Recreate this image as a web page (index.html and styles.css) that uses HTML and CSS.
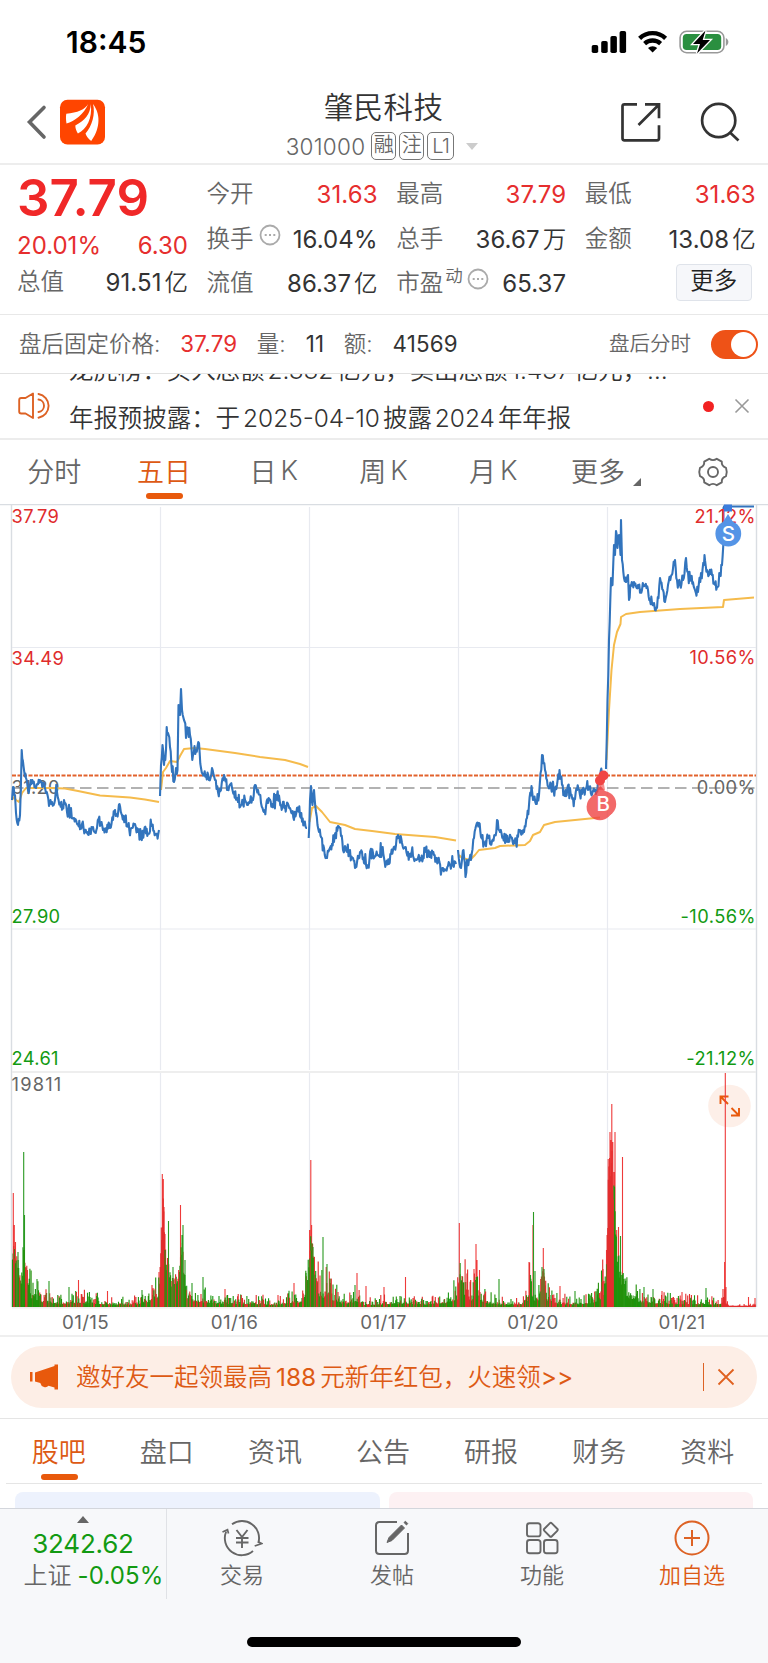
FILE: index.html
```html
<!DOCTYPE html>
<html lang="zh-CN">
<head>
<meta charset="utf-8">
<title>肇民科技 301000</title>
<link rel="stylesheet" href="styles.css">
</head>
<body>
<div class="screen">
  <div class="status">
    <span class="clock">18:45</span>
    <svg class="status-icons" width="140" height="26" viewBox="590 29 140 26">
      <g fill="#000"><rect x="591.7" y="45" width="6.5" height="8" rx="1.8"/><rect x="601.2" y="41" width="6.5" height="12" rx="1.8"/><rect x="610.4" y="36" width="6.5" height="17" rx="1.8"/><rect x="619.6" y="31" width="6.5" height="22" rx="1.8"/></g>
      <g fill="none" stroke="#000" stroke-width="4.4"><path d="M639.6 38.3a19 19 0 0 1 26 0"/><path d="M644.6 43.6a12 12 0 0 1 16 0"/></g>
      <path d="M652.6 52.5l-4.6-4.6a7 7 0 0 1 9.2 0z"/>
      <rect x="680.1" y="31.3" width="43.8" height="21.4" rx="6.5" fill="none" stroke="#999" stroke-width="1.6"/>
      <rect x="682.8" y="34" width="38.400" height="16" rx="3.8" fill="#2a8f40"/>
      <path d="M725.8 38v8c3.4-1.400 3.400-6.600 0-8z" fill="#999"/>
      <path d="M705.500 30.500l-12.500 13.500h7l-3 9.500 13-13.500h-7.300z" stroke="#fff" stroke-width="2.600" paint-order="stroke" fill="#000"/>
    </svg>
  </div>

  <header class="head">
    <svg class="head-left" width="90" height="50" viewBox="20 97 90 50">
      <path d="M44 107.500L29.500 122 44 137" fill="none" stroke="#666" stroke-width="3.600" stroke-linecap="round" stroke-linejoin="miter"/>
      <rect x="60" y="99.700" width="45" height="44.800" rx="7.500" fill="#ff4500"/>
      <g fill="#fff"><path d="M88.300 103.700c-3 5.800-11 9-22 10-.6 3-.3 6.500.2 9.800 8-2.500 17.500-9 21.800-19.800z"/><path d="M90.800 103.900c-.4 10-6 16.500-15.500 21.600 0 3 1.200 5.700 2.600 8 9-5 14.600-15 12.900-29.600z"/><path d="M93 104c2.600 10-1 22-7.500 29.500 1 3 3.300 5.500 5.700 7.500 7.500-10 11-25 1.800-37z"/></g>
    </svg>
    <div class="head-mid">
      <h1>肇民科技</h1>
      <div class="code-row"><span class="code">301000</span><span class="tag">融</span><span class="tag">注</span><span class="tag tag-l">L1</span><i class="caret"></i></div>
    </div>
    <svg class="head-right" width="130" height="50" viewBox="615 97 130 50" fill="none" stroke="#333" stroke-width="2.700">
      <path d="M637 104.300h-12.500q-2 0-2 2v32q0 2 2 2h32.500q2 0 2-2v-13M645 104.300h14v14M659 104.500L638.500 125"/>
      <circle cx="718.700" cy="120.500" r="16.600"/><path d="M730 132.500l8.500 8"/>
    </svg>
  </header>

  <section class="quote">
    <div class="col">
      <div class="price">37.79</div>
      <div class="row chg"><b class="num up">20.01%</b><b class="num up">6.30</b></div>
      <div class="row"><span>总值</span><b class="num">91.51<i>亿</i></b></div>
    </div>
    <div class="col">
      <div class="row"><span>今开</span><b class="num up">31.63</b></div>
      <div class="row"><span class="with-dots">换手<svg class="dots" width="22" height="22" viewBox="0 0 22 22"><circle cx="11" cy="11" r="9.500"/><path d="M5.700 11h2M10 11h2M14.300 11h2"/></svg></span><b class="num">16.04%</b></div>
      <div class="row"><span>流值</span><b class="num">86.37<i>亿</i></b></div>
    </div>
    <div class="col">
      <div class="row"><span>最高</span><b class="num up">37.79</b></div>
      <div class="row"><span>总手</span><b class="num">36.67<i>万</i></b></div>
      <div class="row"><span class="with-dots">市盈<sup>动</sup><svg class="dots pe" width="22" height="22" viewBox="0 0 22 22"><circle cx="11" cy="11" r="9.500"/><path d="M5.700 11h2M10 11h2M14.300 11h2"/></svg></span><b class="num pe-val">65.37</b></div>
    </div>
    <div class="col">
      <div class="row"><span>最低</span><b class="num up">31.63</b></div>
      <div class="row"><span>金额</span><b class="num">13.08<i>亿</i></b></div>
      <div class="row end"><button class="more">更多</button></div>
    </div>
  </section>

  <section class="after">
    <span class="after-price">盘后固定价格:</span><b class="after-num up">37.79</b>
    <span>量:</span><b class="after-num">11</b>
    <span>额:</span><b class="after-num">41569</b>
    <span class="after-label">盘后分时</span><i class="toggle"></i>
  </section>

  <section class="notice">
    <svg class="speaker" width="34" height="30" viewBox="17 391 34 30" fill="none" stroke="#dd6224" stroke-width="1.900" stroke-linejoin="round" stroke-linecap="round"><path d="M33 393.500v24.500l-7.500-4.500h-4.300q-2 0-2-2v-11.500q0-2 2-2h4.300zM38.500 399.500a6.300 6.300 0 0 1 0 12.500M38.500 394a12 12 0 0 1 0 23.700"/></svg>
    <div class="ticker">
      <div>龙虎榜：买入总额<em>2.332</em>亿元，卖出总额<em>1.437</em>亿元，…</div>
      <div>年报预披露：于<em>2025-04-10</em>披露<em>2024</em>年年报</div>
    </div>
    <i class="dot"></i>
    <svg class="close" width="16" height="16" viewBox="0 0 16 16" stroke="#999" stroke-width="1.600"><path d="M1.500 1.500l13 13M14.500 1.500l-13 13"/></svg>
  </section>

  <nav class="tabs">
    <span>分时</span><span class="on">五日</span><span>日<em>K</em></span><span>周<em>K</em></span><span>月<em>K</em></span>
    <span class="tab-more">更多<i class="corner"></i></span>
    <span class="gear"><svg width="32" height="32" viewBox="-16 -16 32 32" fill="none" stroke="#666" stroke-width="1.900" stroke-linejoin="round"><path d="M-3.800-13.200Q0-10.500 3.800-13.200L8.800-10.400Q8.300-6 13-4.200Q14.500 0 13 4.200Q8.300 6 8.800 10.400L3.800 13.200Q0 10.500-3.800 13.200L-8.800 10.400Q-8.300 6-13 4.200Q-14.500 0-13-4.200Q-8.300-6-8.800-10.400Z"/><circle r="5"/></svg></span>
  </nav>

  <svg class="chart" width="768" height="831" viewBox="0 504 768 831">
    <g class="grid">
      <path class="edge" d="M0 504.500H768M11.500 505V1307M756.500 505V1307"/>
      <path d="M160.500 507V1070M309.500 507V1070M458.500 507V1070M607.500 507V1070M160.500 1073V1307M309.500 1073V1307M458.500 1073V1307M607.500 1073V1307M12 647.500H756M12 929H756"/>
      <path class="thick" d="M12 1072H756M12 1307.500H756"/>
    </g>
    <circle cx="729.500" cy="1106" r="21.300" fill="#fdefe8"/>
    <path d="M720.500 1104v-7.500h8M720.500 1096.500l7.500 7.500M739 1108v7.500h-8M739 1115.500l-7.500-7.500" fill="none" stroke="#e8590c" stroke-width="1.900"/>
    <g id="volume"></g>
    <g class="axis">
      <text class="r" x="11.500" y="522.800">37.79</text><text class="r" x="11.500" y="664.500">34.49</text><text x="11.500" y="793.600">31.20</text>
      <text class="g" x="11.500" y="923.300">27.90</text><text class="g" x="11.500" y="1064.700">24.61</text><text class="vol-max" x="11.500" y="1091.300">19811</text>
    </g>
    <path class="prev" d="M12 788H756"/>
    <path class="cost" d="M12 775.500H756"/>
    <g id="average"></g>
    <g id="trend"></g>
    <g class="axis right">
      <text class="r" x="756" y="522.800">21.12%</text><text class="r" x="756" y="664.200">10.56%</text><text x="756" y="793.800">0.00%</text>
      <text class="g" x="756" y="923.300">-10.56%</text><text class="g" x="756" y="1064.700">-21.12%</text>
    </g>
    <g>
      <rect x="724" y="504.500" width="8" height="7" fill="#3b7ddd"/>
      <path d="M728 514l5 8h-10z" fill="#5494e6"/><circle cx="728.300" cy="533.700" r="12.900" fill="#5494e6"/>
      <text class="mark" x="728.300" y="541">S</text>
      <g fill="#f04444"><circle cx="600" cy="780.500" r="5"/><circle cx="603.500" cy="775.500" r="5"/><path d="M598 784h6l1 6h-8z" opacity=".6"/></g>
      <g fill="#ef4444" opacity=".8"><path d="M600.500 786l9 10h-17z"/><circle cx="599.800" cy="807" r="13.200"/><circle cx="603.200" cy="804" r="13"/></g>
      <text class="mark" x="603.200" y="810.500">B</text>
    </g>
    <g class="axis dates"><text x="85.500" y="1328.800">01/15</text><text x="234.500" y="1328.800">01/16</text><text x="383.500" y="1328.800">01/17</text><text x="533" y="1328.800">01/20</text><text x="682" y="1328.800">01/21</text></g>
  </svg>

  <div class="promo-wrap"><div class="promo">
    <svg width="30" height="26" viewBox="29 1364 30 26" fill="#e8590c"><path d="M30 1372h2.500v9.500H30zM35 1372.500l19.500-6.500v-1.500H58v25h-3.500v-2l-6-1.700q-1.800 2-4.500 1.200-3-.700-3.700-4l-5.300-1.500z"/></svg>
    <span class="promo-text">邀好友一起领最高<em>188</em>元新年红包，火速领<em class="arr">&gt;&gt;</em></span>
    <i class="bar"></i>
    <svg width="18" height="18" viewBox="0 0 18 18" stroke="#e0611f" stroke-width="1.800"><path d="M1.500 1.500l15 15M16.500 1.500l-15 15"/></svg>
  </div></div>

  <nav class="subtabs"><span class="on">股吧</span><span>盘口</span><span>资讯</span><span>公告</span><span>研报</span><span>财务</span><span>资料</span></nav>
  <div class="cards"><div class="card blue"></div><div class="card pink"></div></div>

  <footer class="foot">
    <div class="foot-row">
      <div class="index"><i class="up-tri"></i><div class="idx-val">3242.62</div><div class="idx-chg">上证<em>-0.05%</em></div></div>
      <div class="item"><svg width="42" height="38" viewBox="-21 -19 42 38" fill="none" stroke="#666" stroke-width="1.900"><path d="M-10-13.700A17 17 0 0 1 16.300 5M11 13A17 17 0 0 1-15.800-6.500"/><path d="M-19.500-6l5-2.300 1 3.800M12.700 8l7-2.500-3-1.500" stroke-width="1.700"/><path d="M-5.500-8L0-1 5.500-8M-6 0H6.500M-6 4.500H6.500M0-1V10"/></svg><span>交易</span></div>
      <div class="item"><svg width="42" height="38" viewBox="-21 -19 42 38" fill="none" stroke="#666" stroke-width="2"><path d="M5-16H-12.500q-3.500 0-3.500 3.500v25q0 3.500 3.500 3.500h25q3.500 0 3.500-3.500V-5"/><path d="M-5 4.500l2-5L9.500-13l3 3L0 2.500zM12-15.500l1.500-1.200 2.200 2.200-1.200 1.500z" fill="#666" stroke-width="1"/></svg><span>发帖</span></div>
      <div class="item"><svg width="42" height="38" viewBox="-21 -19 42 38" fill="none" stroke="#666" stroke-width="1.900"><rect x="-15" y="-14.800" width="13.500" height="13.200" rx="2.500"/><rect x="-15" y="2" width="13.500" height="13.200" rx="2.500"/><rect x="2" y="2" width="13.500" height="13.200" rx="2.500"/><rect x="-5.300" y="-5.300" width="10.600" height="10.600" rx="1.500" transform="translate(8.800 -8.200) rotate(45)"/></svg><span>功能</span></div>
      <div class="item add"><svg width="42" height="38" viewBox="-21 -19 42 38" fill="none" stroke="#dd6224" stroke-width="2"><circle r="16.500"/><path d="M-8 0H8M0-8V8"/></svg><span>加自选</span></div>
    </div>
    <div class="home"></div>
  </footer>
</div>
<script src="chart.js"></script>
</body>
</html>
```
FILE: styles.css
```css
* { box-sizing: border-box; }
body { margin: 0; background: #fff; }
i, em { font-style: normal; }
b, h1 { font-weight: inherit; margin: 0; }
.screen {
  width: 768px; height: 1663px; overflow: hidden; background: #fff; color: #333;
  display: flex; flex-direction: column;
  font-family: "Inter", "Noto Sans CJK SC", sans-serif; font-weight: 350;
}
.screen > * { flex: none; }

.status { height: 75px; padding: 24px 38px 0 66px; display: flex; justify-content: space-between; align-items: flex-start; }
.clock { font-size: 30px; line-height: 36px; font-weight: 600; color: #000; letter-spacing: 0; }
.status-icons { margin-top: 5px; }

.head { height: 90px; border-bottom: 2px solid #ededed; display: flex; justify-content: space-between; padding: 22px 23px 0 20px; }
.head-mid { width: 230px; margin-top: -9px; display: flex; flex-direction: column; align-items: center; position: relative; left: 21px; }
.head-mid h1 { font-size: 29.5px; line-height: 38px; height: 43px; letter-spacing: 0.4px; }
.code-row { display: flex; align-items: center; height: 30px; color: #666; margin-right: 3px; }
.code { font-size: 22.5px; letter-spacing: 0.25px; margin-right: 6px; }
.tag { width: 25px; height: 28px; border: 1.5px solid #777; border-radius: 5px; font-size: 20px; line-height: 24px; text-align: center; margin-right: 3px; }
.tag-l { width: 27px; letter-spacing: -0.5px; margin-right: 12px; line-height: 26px; }
.caret { border: 6px solid transparent; border-top: 7px solid #ccc; border-bottom: 0; }

.quote { height: 150px; border-bottom: 1px solid #e8e8e8; padding: 8px 12px 0 17px; display: grid; grid-template-columns: 171px 171px 170px 171px; column-gap: 18.600px; }
.row { height: 44.800px; display: flex; justify-content: space-between; align-items: center; font-size: 23.500px; line-height: 34px; color: #666; }
.row > span { margin-top: -3px; }
.num { font-size: 24px; font-weight: 400; color: #333; letter-spacing: 0.100px; white-space: nowrap; margin-top: -1px; }
.num.up { color: #e62e2e; }
.num i { font-size: 23.500px; font-weight: 350; margin-left: 3px; letter-spacing: 0; }
.price { font-size: 51px; line-height: 49px; height: 55px; font-weight: 600; color: #f02828; letter-spacing: 0; margin-left: 0; }
.chg { height: 33px; }
.chg .num { margin-top: 2px; letter-spacing: 0; }
.with-dots { display: flex; align-items: center; }
.dots { fill: none; stroke: #aaa; stroke-width: 1.800; margin: -8px 0 0 5px; }
.dots.pe { margin-left: 4px; }
.with-dots sup { font-size: 17.500px; line-height: 20px; margin: -14px 0 0 2px; }
.end { justify-content: flex-end; padding-right: 4px; }
.more { width: 76px; height: 37px; border: 1px solid #dfe3ea; border-radius: 4px; background: #f6f7fa; color: #222; font: inherit; font-size: 23.500px; line-height: 30px; padding: 0 0 2px; margin-top: -5px; }

.after { height: 59px; border-bottom: 1px solid #e2e2e2; padding: 0 10px 0 19px; display: flex; align-items: center; font-size: 22.500px; color: #666; }
.after span { margin-top: -4px; }
.after-num { font-size: 22.300px; font-weight: 400; color: #333; letter-spacing: 0.200px; margin: -2px 19.500px 0 20px; }
.after-num.up { color: #e62e2e; }
.after .after-label { font-size: 20.500px; margin-left: auto; margin-right: 20px; }
.toggle { width: 47px; height: 29px; border-radius: 15px; background: #ee5217; display: flex; justify-content: flex-end; padding: 2px; }
.toggle::after { content: ""; width: 25px; height: 25px; border-radius: 50%; background: #fff; }

.notice { height: 66px; border-bottom: 2px solid #ececec; display: flex; align-items: center; padding: 0 18px 0 17px; overflow: hidden; }
.notice svg, .notice i { flex: none; }
.ticker { margin-left: 18px; width: 634px; font-size: 24.450px; line-height: 48px; margin-top: -25px; white-space: nowrap; color: #333; }
.ticker em { margin: 0 3px; }
.dot { width: 11px; height: 11px; border-radius: 50%; background: #f22222; margin-right: 20px; }

.tabs { height: 64px; display: grid; grid-template-columns: repeat(7, 1fr); }
.tabs span, .subtabs span { position: relative; display: flex; justify-content: center; align-items: center; font-size: 27px; color: #666; padding: 0 1px 4px 0; }
.tabs .tab-more { padding-right: 11px; }
.tabs .gear { padding: 0; }
.subtabs span { padding: 0 2px 2px 0; }
.tabs em { margin-left: 4px; }
.tabs .on, .subtabs .on { color: #dd5a14; }
.on::after { content: ""; position: absolute; width: 37px; height: 6px; border-radius: 3px; background: #e8590c; bottom: 5px; left: 50%; margin-left: -19px; }
.corner { position: absolute; right: 17px; bottom: 18px; border-left: 8px solid transparent; border-bottom: 8px solid #666; }

.chart { display: block; }
.grid path { fill: none; stroke: #e8eaf0; stroke-width: 1.200; }
.grid .edge { stroke: #d9dde2; stroke-width: 1.400; }
.grid .thick { stroke: #eee; stroke-width: 2; }
.prev { stroke: #999; stroke-width: 1.300; stroke-dasharray: 11.500 5.500; fill: none; }
.cost { stroke: #e2622c; stroke-width: 1.900; stroke-dasharray: 4 1.500; fill: none; }
.axis text { font-size: 18.300px; font-weight: 400; letter-spacing: 0.350px; fill: #666; }
.axis .vol-max { letter-spacing: 1.200px; }
.axis .r { fill: #e02c2c; }
.axis .g { fill: #129a12; }
.axis.right text { text-anchor: end; letter-spacing: 0.450px; }
.axis.dates text { text-anchor: middle; font-size: 18.800px; letter-spacing: 0.350px; }
.mark { fill: #fff; font-size: 20.500px; font-weight: 500; text-anchor: middle; }
#trend path { fill: none; stroke: #3274bd; stroke-width: 2.100; stroke-linejoin: round; }
#average path { fill: none; stroke: #f5bb4c; stroke-width: 2; stroke-linejoin: round; }

.promo-wrap { height: 84px; border-top: 2px solid #efefef; border-bottom: 1px solid #e5e5e5; padding: 9px 11px 0; }
.promo { height: 62px; border-radius: 31px; background: #fdeee6; display: flex; align-items: center; padding: 0 22px 0 18px; color: #dd5a14; }
.promo-text { font-size: 24.500px; margin: -3px 0 0 17px; white-space: nowrap; }
.promo-text em { margin: 0 4px; font-weight: 400; }
.promo-text .arr { margin: 0; }
.bar { width: 1.500px; height: 28px; background: #dd6224; margin: 0 13px 0 auto; }

.subtabs { height: 65px; margin: 0 6px; border-bottom: 1px solid #e5e5e5; display: grid; grid-template-columns: repeat(7, 108.100px); justify-content: center; }
.subtabs .on::after { bottom: 3px; }
.cards { height: 24px; padding: 8px 15px 0; display: flex; gap: 9px; }
.card { flex: 1; border-radius: 8px 8px 0 0; }
.blue { background: #edf2fd; }
.pink { background: #fdf1f3; }

.foot { flex: 1 1 auto !important; background: #f7f8fa; border-top: 1px solid #d3d6dc; }
.foot-row { height: 90px; display: grid; grid-template-columns: 167px repeat(4, 150px); }
.index { border-right: 1px solid #e0e2e6; display: flex; flex-direction: column; align-items: center; color: #129a12; padding-top: 7px; }
.up-tri { border: 6px solid transparent; border-bottom: 7px solid #666; border-top: 0; }
.idx-val { font-size: 26px; font-weight: 400; line-height: 30px; margin-top: 6px; letter-spacing: -0.200px; }
.idx-chg { font-size: 24px; line-height: 32px; color: #666; white-space: nowrap; margin: 1px 0 0 21px; }
.idx-chg em { color: #129a12; font-weight: 400; margin-left: 6px; letter-spacing: 0.100px; }
.item { display: flex; flex-direction: column; align-items: center; padding-top: 10px; font-size: 22px; line-height: 30px; color: #666; }
.item span { margin-top: 3px; }
.add { color: #dd5a14; }
.home { width: 274px; height: 10px; border-radius: 5px; background: #000; margin: 38px 0 0 247px; }
```
FILE: chart.js
```js
const NS = 'http://www.w3.org/2000/svg';
let seed = 7;
const rnd = () => (seed = (seed * 16807) % 2147483647) / 2147483647;

// Price points per day: x, y pairs.
const trend = [
  [12,800,13,787,15,795,16,813,18,825,20,815,21.7,750,23.5,766,26,778,28,790,30,785,33,783,36,788,40,780,43,783,46,793,49,806,52,802,55,800,57,792,60,803,64,800,67,812,71,808,74,818,78,824,82,824,85,830,90,833,93,827,97,828,100,826,103,830,106,829,110,828,113,820,115,810,117,814,119.5,804,122,815,125,818,128,826,132,828,135,824,138,832,141,838,144,831,148,834,152,826,154,831,159,830],
  [160,796,161,765,162.5,745,164,765,166,750,166.7,727,168,733,170,747,172,772,174,782,176,768,177.5,770,178.5,705,180,715,181,689,182,710,184,720,186,738,188,728,190,735,193,755,196,750,199,743,201,768,204,775,206,775,209,780,212,768,215,780,218,792,221,790,224,775,227,790,230,785,234,792,238,802,241,805,245,800,250,802,253,800,255,785,258,790,261,803,264,812,268,803,272,804,277,795,281,805,285,806,290,808,294,820,297,808,300,816,304,824,307,828],
  [308.7,838,310,800,311,786,312.5,805,314,790,316,812,319,832,322,838,324,848,327,858,330,848,334,842,338,826,341,836,343,850,347,852,350,850,353,858,355,868,360,852,364,863,368,865,373,853,378,855,382,851,386,862,389,864,393,850,396,845,398,835,402,843,405,847,408,852,413,856,418,858,421,860,425,852,430,852,434,855,438,862,443,868,448,866,453,865,456,864],
  [458,850,461,868,463.5,850,465.5,877,467,860,471,860,474,838,476,826,479,823,481,837,484,844,488,838,492,841,495,835,497,820,500,832,503,837,508,842,512,838,516,843,520,830,524,832,527,818,529,805,531.5,786,533,800,536,804,539,795,542,755,545,770,547,780,551,787,555,788,557,785,559.5,770,562,785,564,793,570,788,573,798,577,790,582,794,588,790,593,791,596,794,598,780,602,774],
  [606,769,607.5,700,609,640,611,578,612.5,585,614,545,615,555,616,531,617.5,548,619,535,620.5,555,621,520,622,560,624,578,626,582,628,575,629,600,631,586,634,582,638,585,642,590,645,585,648,590,650,600,654,603,655,610,657,608,660,578,663,590,665,602,668,585,671,576,675,560,677,580,680,585,683,580,686,558,688,572,691,578,695,590,698,592,701,573,704,565,704.5,555,707,570,709,575,712,575,717,587,720,575,722,565,723.3,545,723.5,508,725,506.5,754,506.5]
];
const average = [
  [12,800,14,797,16,800,19,802,22,793,26,788,50,788,65,788.5,78,791,100,795.5,130,797.5,145,799.5,159,802],
  [161,790,163,772,166,768,170,761,177,762,180,756,184,749,195,748,205,749,235,753,260,757,285,760,300,764,308,767],
  [309.5,822,312,808,316,806,322,812,330,822,345,825,355,829,372,831,395,834,435,837,456,840.5],
  [459,855,462,858,470,860,475,855,479,850,495,848,500,846,525,845,530,841,533,835,540,832,544,825,555,822,600,817.5],
  [606.5,760,609,710,611.5,670,614,645,617,632,620.5,624,621,617,626,614,640,612,680,609,723,607,724,600,754,597.5]
];
const add = (id, d, stroke) => {
  const p = document.createElementNS(NS, 'path');
  p.setAttribute('d', d);
  if (stroke) { p.setAttribute('stroke', stroke); p.setAttribute('stroke-width', '1.1'); }
  document.getElementById(id).appendChild(p);
};
average.forEach(a => {
  let d = 'M' + a[0] + ' ' + a[1];
  for (let i = 2; i < a.length; i += 2) d += 'L' + a[i] + ' ' + a[i + 1];
  add('average', d);
});
trend.forEach(a => {
  let d = 'M' + a[0] + ' ' + a[1];
  for (let i = 2; i < a.length; i += 2) {
    const dx = a[i] - a[i - 2], dy = a[i + 1] - a[i - 1];
    const n = a[i - 2] >= 724 ? 1 : Math.max(1, Math.round(dx / 0.7));
    for (let k = 1; k <= n; k++) {
      const wild = rnd() < 0.15 ? 20 : 11;
      const j = k < n ? (rnd() - 0.5) * wild : 0;
      d += 'L' + (a[i - 2] + dx * k / n).toFixed(1) + ' ' + (a[i - 1] + dy * k / n + j).toFixed(1);
    }
  }
  add('trend', d);
});

// Volume: typical bar height by x, then the tall single bars.
const level = [12,50,14,60,17,45,20,36,22,34,24,70,26,45,28,30,32,18,40,11,50,8,60,6,75,8,85,8,100,6,115,5,135,5,150,9,157,14,159.5,20,160.5,50,163,110,165,60,168,42,172,26,178,32,182,65,184,40,187,18,195,10,205,10,220,7,240,6,260,6,275,4,290,8,300,9,307,25,309.5,60,311,75,314,50,317,26,322,18,328,25,332,14,340,8,350,7,356,12,362,4,390,6,405,6,425,5,445,8,457,14,458.5,30,462,28,467,18,472,12,476,30,479,20,483,9,500,5,525,5,531,28,534,12,540,9,543,35,548,11,560,6,580,5,596,10,603,22,606,30,608,112,612,160,614,120,617,60,620,38,624,28,630,18,640,8,650,7,680,6,720,5,724,12,726,4,730,1.5,755,1.5];
const spikes = [[13.3,114,1],[14.3,82,1],[15.5,65,1],[18,55,0],[23.7,155,0],[24.5,92,0],[37,28,0],[49,26,0],[69,20,0],[78.5,27,1],[107.5,16,1],[142,17,0],[159,35,1],[162.3,133,1],[163.3,128,1],[164,100,1],[165,73,1],[168.5,86,0],[173,40,0],[180.5,102,1],[182,72,0],[183,82,0],[185,47,0],[192,24,0],[203,30,0],[225,18,1],[278,12,1],[294,24,1],[306,34,0],[309.6,77,1],[310.8,147,1],[311.6,82,1],[313,60,0],[323,70,0],[327,43,0],[331,28,1],[355,22,0],[357,34,1],[366,21,1],[384,20,1],[405.5,30,1],[459.3,84,1],[460.2,44,0],[474,38,1],[476,63,1],[477,47,1],[479.5,37,1],[499,28,0],[529,45,1],[530.5,32,0],[533,82,1],[533.5,95,0],[535,36,0],[543.3,59,1],[542,40,0],[544,38,0],[560,21,1],[575,16,0],[603,38,1],[606.5,57,1],[608.2,148,1],[610,175,1],[611,167,1],[611.8,203,1],[612.8,165,1],[614,135,1],[615,175,1],[616.7,77,1],[618.5,80,1],[620.5,71,0],[622.5,150,1],[644,20,0],[653,18,0],[662,16,1],[682,15,1],[706,19,0],[724.6,45,1],[725.3,234,1],[726,20,1],[748.5,10,1],[755,9,1]];
let red = '', green = '', last = '';
const bar = (x, h) => 'M' + x.toFixed(1) + ' 1307v-' + h.toFixed(1);
let s = 0;
for (let x = 12.5; x < 755.5; x += 0.62) {
  while (s < level.length - 4 && level[s + 2] < x) s += 2;
  const t = (x - level[s]) / (level[s + 2] - level[s]);
  const base = level[s + 1] + (level[s + 3] - level[s + 1]) * t;
  const r = rnd();
  const h = Math.max(1.3, base * (base > 25 ? 0.75 + r * 0.4 : 0.5 + r * r * r * 1.8));
  const hot = (x > 159 && x < 164.5) || (x > 607 && x < 613) || x > 723;
  const cool = x > 614 && x < 640;
  if (hot || (!cool && rnd() < 0.4)) red += bar(x, h);
  else if (rnd() < 0.45) green += bar(x, h);
  else last += bar(x, h * 0.9);
}
let redTop = '', greenTop = '';
spikes.forEach(([x, h, r]) => { if (r) redTop += bar(x, h); else greenTop += bar(x, h); });
add('volume', redTop, '#ee3a3a');
add('volume', green, '#19960f');
add('volume', red, '#e22d2d');
add('volume', greenTop, '#2a9a22');
add('volume', last, '#229009');
```
